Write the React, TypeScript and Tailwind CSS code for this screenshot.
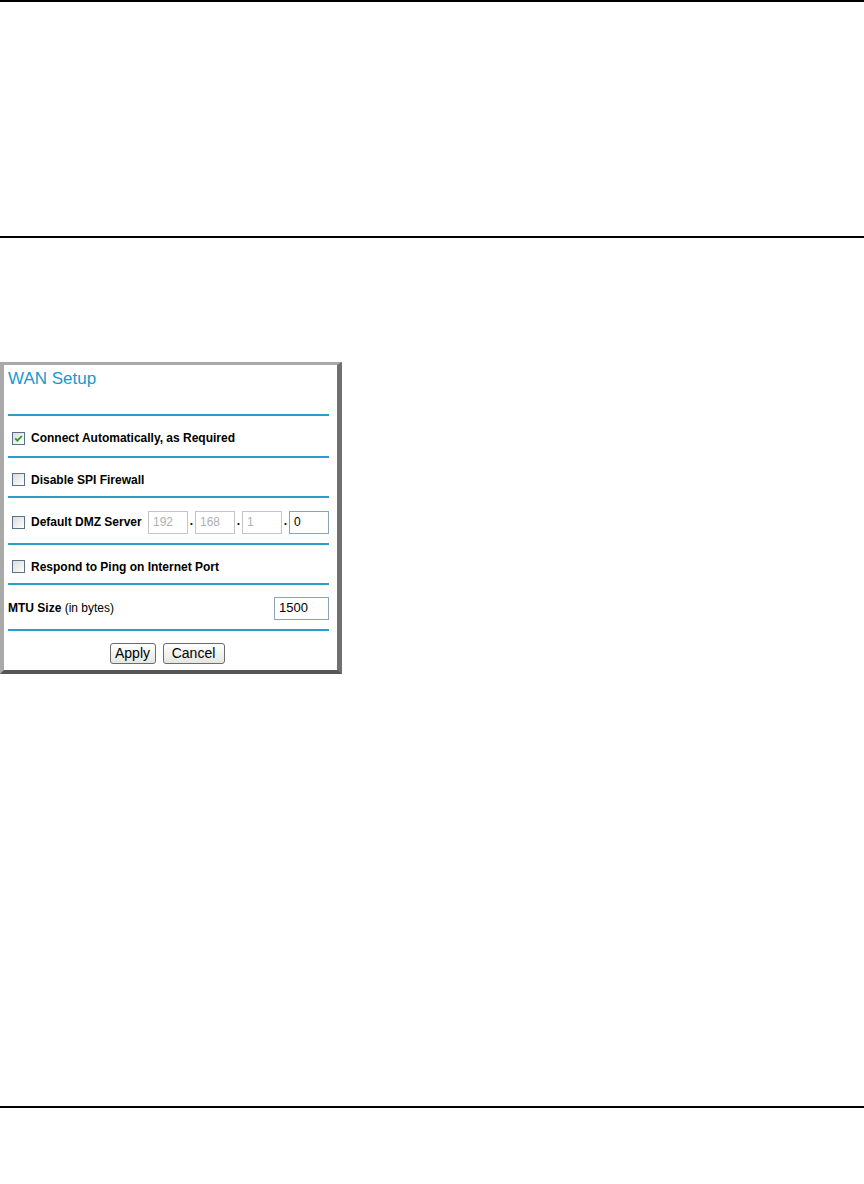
const font = { fontFamily: '"Liberation Sans", Arial, sans-serif' };

function Check({ checked = false }: { checked?: boolean }) {
  return (
    <span className="flex h-[13px] w-[13px] shrink-0 items-center justify-center border border-[#5a6f88] bg-gradient-to-br from-[#dcdcd7] to-white">
      {checked && (
        <svg width="9" height="9" viewBox="0 0 9 9">
          <path d="M1.2 4.4 L3.4 6.6 L7.8 2" fill="none" stroke="#21a121" strokeWidth="1.8" />
        </svg>
      )}
    </span>
  );
}

function Rule() {
  return <div className="h-[2px] bg-[#2a9dc8]" />;
}

function IpBox({ value, disabled }: { value: string; disabled?: boolean }) {
  return (
    <span
      className={
        "flex h-[23px] w-[40px] items-center border px-[4px] text-[12px] " +
        (disabled ? "border-[#c4c4c4] text-[#b0b0b0]" : "border-[#8fa3b8] text-black")
      }
    >
      {value}
    </span>
  );
}

function Btn({ label, w }: { label: string; w: string }) {
  return (
    <span
      className={
        "flex h-[21px] items-center justify-center rounded-[3px] border border-[#6b6b6b] bg-gradient-to-b from-white to-[#e6e6e0] text-[14px] text-black " +
        w
      }
    >
      {label}
    </span>
  );
}

export default function App() {
  return (
    <div className="min-h-[1184px] w-[864px] bg-white" style={font}>
      <div className="h-[2px] bg-black" />
      <div className="h-[234px]" />
      <div className="h-[2px] bg-black" />

      {/* WAN Setup panel */}
      <div className="mt-[124px] h-[312px] w-[342px] border-t-[3px] border-l-[4px] border-r-[5px] border-b-[4px] border-t-[#a9a9a9] border-l-[#a9a9a9] border-r-[#707070] border-b-[#555555] bg-white pl-[4px] pr-[8px]">
        <div className="h-[49px] pt-[4px]">
          <div className="text-[17px] leading-[20px] text-[#1a98cc]">WAN Setup</div>
        </div>
        <Rule />
        <div className="flex h-[40px] items-center gap-[6px] pl-[4px] pt-[4px] text-[12px] font-bold">
          <Check checked />
          <span>Connect Automatically, as Required</span>
        </div>
        <Rule />
        <div className="flex h-[38px] items-center gap-[6px] pl-[4px] pt-[5px] text-[12px] font-bold">
          <Check />
          <span>Disable SPI Firewall</span>
        </div>
        <Rule />
        <div className="flex h-[45px] items-center pl-[4px] pt-[3px] text-[12px]">
          <Check />
          <span className="ml-[6px] font-bold">Default DMZ Server</span>
          <div className="ml-auto flex items-center">
            <IpBox value="192" disabled />
            <span className="w-[7px] self-end pb-[4px] text-center font-bold">.</span>
            <IpBox value="168" disabled />
            <span className="w-[7px] self-end pb-[4px] text-center font-bold">.</span>
            <IpBox value="1" disabled />
            <span className="w-[7px] self-end pb-[4px] text-center font-bold">.</span>
            <IpBox value="0" />
          </div>
        </div>
        <Rule />
        <div className="flex h-[38px] items-center gap-[6px] pl-[4px] pt-[5px] text-[12px] font-bold">
          <Check />
          <span>Respond to Ping on Internet Port</span>
        </div>
        <Rule />
        <div className="flex h-[44px] items-center pt-[2px] text-[12px]">
          <span>
            <b>MTU Size</b> (in bytes)
          </span>
          <span className="ml-auto flex h-[23px] w-[55px] items-center border border-[#8fa3b8] px-[4px] text-[13px]">
            1500
          </span>
        </div>
        <Rule />
        <div className="flex h-[39px] items-center justify-center gap-[7px] pt-[5px] pr-[3px]">
          <Btn label="Apply" w="w-[46px]" />
          <Btn label="Cancel" w="w-[62px]" />
        </div>
      </div>

      <div className="h-[432px]" />
      <div className="h-[2px] bg-black" />
    </div>
  );
}
